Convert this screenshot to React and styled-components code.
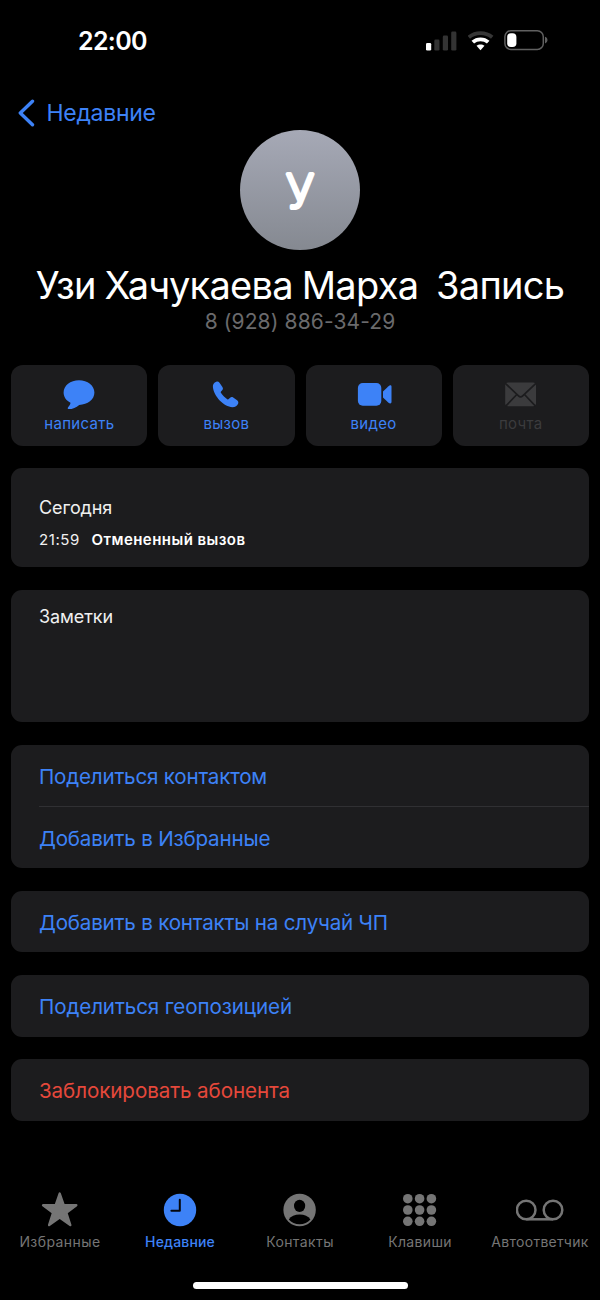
import React from "react";
import styled, { createGlobalStyle } from "styled-components";

const BLUE = "#3d82f7";
const GRAY = "#757575";
const CARD = "#1c1c1e";

const GlobalStyle = createGlobalStyle`
  * { box-sizing: border-box; }
  body { margin: 0; background: #000; }
`;

const Screen = styled.div`
  width: 600px;
  height: 1300px;
  display: flex;
  flex-direction: column;
  background: #000;
  color: #fff;
  font-family: Inter, "Liberation Sans", sans-serif;
  overflow: hidden;
`;

const StatusBar = styled.header`
  height: 82px;
  display: flex;
  justify-content: space-between;
  align-items: center;
  padding: 0 52px 0 78px;
`;

const Time = styled.span`
  font-size: 25px;
  font-weight: 600;
  letter-spacing: -0.65px;
`;

const StatusIcons = styled.div`
  display: flex;
  align-items: center;
  gap: 10.5px;
`;

const NavBar = styled.nav`
  height: 47.5px;
  padding: 17px 0 0 18px;
`;

const BackLink = styled.a`
  height: 28px;
  display: flex;
  align-items: center;
  gap: 11.5px;
  color: ${BLUE};
  font-size: 23px;
  letter-spacing: -0.28px;
`;

const Profile = styled.section`
  height: 235.5px;
  display: flex;
  flex-direction: column;
  align-items: center;
`;

const Avatar = styled.div`
  width: 120px;
  height: 120px;
  border-radius: 50%;
  background: linear-gradient(#a6a9b6, #858991);
  overflow: hidden;
`;

const Name = styled.h1`
  margin: 11.5px 0 0;
  font-size: 38px;
  line-height: 48px;
  font-weight: 400;
  letter-spacing: -0.72px;
  word-spacing: -1.1px;
  white-space: pre;
`;

const Phone = styled.p`
  margin: -1px 0 0;
  font-size: 21px;
  line-height: 28px;
  letter-spacing: 0.12px;
  color: #6a6a6c;
`;

const Actions = styled.div`
  display: grid;
  grid-template-columns: repeat(4, 1fr);
  gap: 11px;
  padding: 0 11.3px;
  height: 80.5px;
`;

const ActionButton = styled.button`
  display: flex;
  flex-direction: column;
  align-items: center;
  padding: 12.5px 0 0;
  border: 0;
  border-radius: 12px;
  background: ${CARD};
  color: ${(p) => (p.$disabled ? "#3b3b3d" : BLUE)};
  font-family: inherit;
  font-size: 15px;
  line-height: 20px;
  letter-spacing: 0.3px;
`;

const ActionIcon = styled.span`
  height: 34px;
  display: flex;
  align-items: center;
  margin-bottom: 2px;
`;

const Cards = styled.main`
  display: flex;
  flex-direction: column;
  gap: 22.7px;
  padding: 22.8px 11.3px 0;
`;

const Card = styled.section`
  border-radius: 11px;
  background: ${CARD};
  height: ${(p) => p.$height || "auto"};
  padding-left: 27.7px;
`;

const CardTitle = styled.h2`
  margin: 0;
  padding-top: ${(p) => p.$top};
  font-size: 18px;
  line-height: 24px;
  font-weight: 400;
  color: #f0f0f0;
  letter-spacing: -0.1px;
`;

const CallRow = styled.div`
  display: flex;
  gap: 11.5px;
  margin-top: 9px;
  font-size: 15px;
  line-height: 22px;
  letter-spacing: 0.6px;
  color: #f0f0f0;
`;

const CallType = styled.strong`
  font-weight: 600;
  letter-spacing: 0.45px;
  color: #fff;
`;

const Row = styled.button`
  display: block;
  width: 100%;
  height: 61.5px;
  padding: 2.6px 0 0;
  border: 0;
  border-bottom: 1px solid ${(p) => (p.$divided ? "#303033" : "transparent")};
  background: none;
  text-align: left;
  color: ${(p) => (p.$danger ? "#e5483b" : BLUE)};
  font-family: inherit;
  font-size: 20.6px;
  letter-spacing: ${(p) => p.$spacing};
`;

const TabBar = styled.nav`
  display: grid;
  grid-template-columns: repeat(5, 120px);
  margin-top: auto;
  height: 90px;
`;

const Tab = styled.a`
  display: flex;
  flex-direction: column;
  align-items: center;
  color: ${(p) => (p.$active ? BLUE : GRAY)};
  font-size: 14px;
  line-height: 20px;
  font-weight: ${(p) => (p.$active ? 500 : 400)};
  letter-spacing: ${(p) => p.$spacing};
`;

const TabIcon = styled.span`
  height: 40px;
  margin-bottom: 2px;
  display: flex;
  align-items: center;
`;

const HomeIndicator = styled.div`
  width: 215px;
  height: 7px;
  margin: 2px auto 11px;
  border-radius: 4px;
  background: #fff;
  flex: none;
`;

const Signal = () => (
  <svg width="31" height="20" viewBox="0 0 31 20">
    <rect x="0" y="12" width="5.2" height="7.6" rx="1.3" fill="#fff" />
    <rect x="8.3" y="8.6" width="5.2" height="11" rx="1.3" fill="#333" />
    <rect x="16.8" y="4.6" width="5.2" height="15" rx="1.3" fill="#333" />
    <rect x="25.2" y=".6" width="5.2" height="19" rx="1.3" fill="#333" />
  </svg>
);

const Wifi = () => (
  <svg width="26" height="20" viewBox="0.5 0 26 20" fill="none" strokeWidth="3.8">
    <path d="M1.3 6.3C7.8.8 18.2.8 24.7 6.3" stroke="#363636" />
    <path d="M5.3 11.2C9.6 7.3 16.4 7.3 20.7 11.2" stroke="#fff" />
    <path d="M9 14.8C11.3 12.9 14.7 12.9 17 14.8L13 19.2Z" fill="#fff" />
  </svg>
);

const Battery = () => (
  <svg width="44" height="22" viewBox="0 0.4 44 22">
    <rect x=".9" y="1.2" width="38.4" height="18.6" rx="6" fill="none" stroke="#606060" strokeWidth="1.5" />
    <rect x="3.2" y="3.6" width="9.2" height="13.8" rx="3.8" fill="#fff" />
    <path d="M41 7.2C44.3 8.3 44.3 12.7 41 13.8Z" fill="#606060" />
  </svg>
);

const Chevron = () => (
  <svg width="17" height="28" viewBox="0 0 17 28" fill="none">
    <path d="M14.5 2.2 2.3 14 14.5 25.8" stroke={BLUE} strokeWidth="3.4" strokeLinecap="round" strokeLinejoin="round" />
  </svg>
);

const Monogram = () => (
  <svg width="120" height="120" viewBox="0 0 120 120">
    <text x="60.2" y="78.2" textAnchor="middle" fontSize="47" fontWeight="200" fill="#fff" stroke="#fff" strokeWidth="4" strokeLinejoin="round">
      У
    </text>
  </svg>
);

const Bubble = () => (
  <svg width="32" height="30" viewBox="0 0.4 32 30" fill="currentColor">
    <path d="M16 .7C24.6.7 31.4 6 31.4 13S24.6 25.3 16.2 25.3C13.3 27.7 9.4 29.5 6 29.5 4.7 29.5 4.3 28.5 5.1 27.6 6.6 26.1 7.3 24.8 7.5 23.2 3.1 21 .6 17.3.6 13 .6 6 7.4.7 16 .7Z" />
  </svg>
);

const Handset = () => (
  <svg width="28" height="28" viewBox="0.4 0.3 28 28" fill="currentColor">
    <path d="M1.3 6.4C1 3.8 2.4 1.7 4.7 1 6 .6 7.1 1 7.9 2.1L10.8 6.2C11.6 7.4 11.5 8.5 10.6 9.5L9.4 10.7C9 11.1 9 11.6 9.3 12.1 10.8 14.6 13.2 17 15.7 18.5 16.2 18.8 16.7 18.8 17.1 18.4L18.3 17.2C19.3 16.2 20.4 16 21.6 16.8L25.5 19.6C26.6 20.4 27 21.5 26.6 22.8 25.8 25.1 23.6 26.6 20.8 26.6 12.2 26.3 2.1 15.5 1.3 6.4Z" />
  </svg>
);

const Camera = () => (
  <svg width="36" height="24" viewBox="-0.9 0.7 36 24" fill="currentColor">
    <rect x="1" y=".8" width="23.4" height="22.6" rx="4.8" />
    <path d="M26.1 9.3 31.6 3.9C33 2.6 34.6 2.8 34.6 4.4V19.8C34.6 21.4 33 21.7 31.6 20.4L26.1 15.2Z" />
  </svg>
);

const Envelope = () => (
  <svg width="32" height="26" viewBox="0.5 0.5 32 26">
    <rect x=".7" y="1" width="30.8" height="23.8" rx="3" fill="currentColor" />
    <path d="M.8 1.8 14 14.3C15.3 15.6 16.9 15.6 18.2 14.3L31.4 1.8M1.3 24.7 12.3 13M31 24.7 20 13" fill="none" stroke={CARD} strokeWidth="1.7" />
  </svg>
);

const Star = () => (
  <svg width="38" height="36" viewBox="0.3 0.4 38 36" fill="currentColor" stroke="currentColor" strokeWidth="2.4" strokeLinejoin="round">
    <path d="M19 2 23 13.5 35.6 13.7 25.6 21.1 29.6 33.4 19 25.9 8.4 33.4 12.4 21.1 2.4 13.7 15 13.5Z" />
  </svg>
);

const Clock = () => (
  <svg width="34" height="34" viewBox="0 0 34 34">
    <circle cx="17" cy="17" r="16.2" fill="currentColor" />
    <path d="M16.8 6.8V17.8H8.4" fill="none" stroke="#05070c" strokeWidth="2" strokeLinecap="round" strokeLinejoin="round" />
  </svg>
);

const Person = () => (
  <svg width="34" height="34" viewBox="0.4 0 34 34">
    <circle cx="17" cy="17" r="16.2" fill="currentColor" />
    <ellipse cx="17" cy="12.9" rx="5.6" ry="6.2" fill="#000" />
    <path d="M6.2 26.5C8.2 23.3 12.2 21.6 17 21.6S25.8 23.3 27.8 26.5C25.2 29.6 21.4 31.2 17 31.2S8.8 29.6 6.2 26.5Z" fill="#000" />
  </svg>
);

const Keypad = () => (
  <svg width="34" height="34" viewBox="0.4 0 34 34" fill="currentColor">
    {[5.7, 17, 28.3].map((y) => [5.2, 17, 28.8].map((x) => <circle key={`${x}-${y}`} cx={x} cy={y} r="4.8" />))}
  </svg>
);

const Voicemail = () => (
  <svg width="48" height="22" viewBox="0.4 0 48 22" fill="none" stroke="currentColor" strokeWidth="2.5">
    <circle cx="10.6" cy="11" r="9.3" />
    <circle cx="37.4" cy="11" r="9.3" />
    <path d="M10.6 20.3H37.4" />
  </svg>
);

const ACTIONS = [
  { label: "написать", icon: <Bubble /> },
  { label: "вызов", icon: <Handset /> },
  { label: "видео", icon: <Camera /> },
  { label: "почта", icon: <Envelope />, disabled: true },
];

const TABS = [
  { label: "Избранные", icon: <Star />, spacing: "0.43px" },
  { label: "Недавние", icon: <Clock />, spacing: "0.15px", active: true },
  { label: "Контакты", icon: <Person />, spacing: "0.4px" },
  { label: "Клавиши", icon: <Keypad />, spacing: "0.35px" },
  { label: "Автоответчик", icon: <Voicemail />, spacing: "0.29px" },
];

export default function App() {
  return (
    <Screen>
      <GlobalStyle />
      <StatusBar>
        <Time>22:00</Time>
        <StatusIcons>
          <Signal />
          <Wifi />
          <Battery />
        </StatusIcons>
      </StatusBar>
      <NavBar>
        <BackLink>
          <Chevron />
          Недавние
        </BackLink>
      </NavBar>
      <Profile>
        <Avatar>
          <Monogram />
        </Avatar>
        <Name>{"Узи Хачукаева Марха  Запись"}</Name>
        <Phone>8 (928) 886-34-29</Phone>
      </Profile>
      <Actions>
        {ACTIONS.map((a) => (
          <ActionButton key={a.label} $disabled={a.disabled}>
            <ActionIcon>{a.icon}</ActionIcon>
            {a.label}
          </ActionButton>
        ))}
      </Actions>
      <Cards>
        <Card $height="99px">
          <CardTitle $top="28px">Сегодня</CardTitle>
          <CallRow>
            <span>21:59</span>
            <CallType>Отмененный вызов</CallType>
          </CallRow>
        </Card>
        <Card $height="132.5px">
          <CardTitle $top="14.8px">Заметки</CardTitle>
        </Card>
        <Card>
          <Row $divided $spacing="-0.2px">Поделиться контактом</Row>
          <Row $spacing="-0.2px">Добавить в Избранные</Row>
        </Card>
        <Card>
          <Row $spacing="-0.2px">Добавить в контакты на случай ЧП</Row>
        </Card>
        <Card>
          <Row $spacing="-0.11px">Поделиться геопозицией</Row>
        </Card>
        <Card>
          <Row $danger $spacing="-0.09px">Заблокировать абонента</Row>
        </Card>
      </Cards>
      <TabBar>
        {TABS.map((t) => (
          <Tab key={t.label} $active={t.active} $spacing={t.spacing}>
            <TabIcon>{t.icon}</TabIcon>
            {t.label}
          </Tab>
        ))}
      </TabBar>
      <HomeIndicator />
    </Screen>
  );
}
